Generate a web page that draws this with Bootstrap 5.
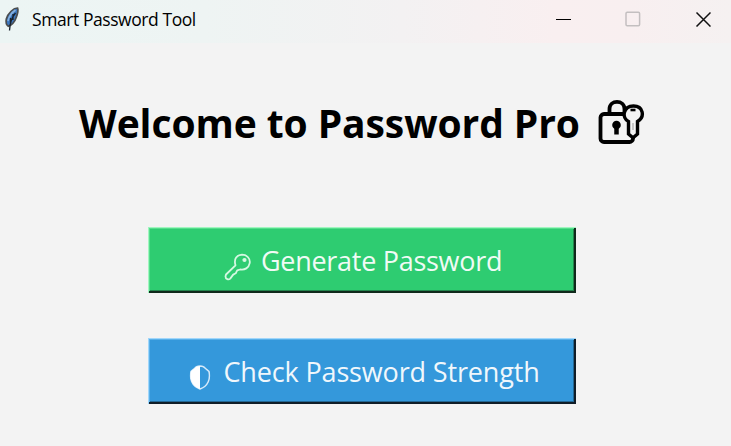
<!DOCTYPE html>
<html lang="en">
<head>
<meta charset="utf-8">
<title>Smart Password Tool</title>
<link href="https://cdn.jsdelivr.net/npm/bootstrap@5.3.0/dist/css/bootstrap.min.css" rel="stylesheet">
<style>
body{background:#f3f3f3;font-family:"Open Sans","Noto Sans",sans-serif;color:#000;overflow:hidden}
.titlebar{height:43px;padding:0 20px 5px 4px;background:linear-gradient(90deg,#ecf5f4 0,#eef4f3 28%,#f3f1f2 55%,#f9eff0 76%,#f8eff0 86%,#f5f1f1 100%)}
.caption{font-size:17.5px;line-height:24px;margin-left:11px;letter-spacing:-.43px}
.winctl{gap:54px}
.headline{font-size:39px;line-height:54px;font-weight:700;letter-spacing:-.08px;margin:0;white-space:nowrap}
.headrow{margin:53px 0 0 79px;height:54px}
.lockicon{margin-left:15px}
.actions{padding:77px 0 0 148px;gap:45px}
.tkbtn{width:428px;height:66px;color:#fff;font-size:27px;line-height:36px;white-space:nowrap;border:0;border-radius:0;text-align:left}
.tkgreen{background:#2ecc71;box-shadow:inset 1px 1px #a0f6bf,inset -2px -2px #10291b,inset 2px 2px #55dd8c,inset -3px -3px #23854d}
.tkblue{background:#3498db;box-shadow:inset 1px 1px #a0d6fa,inset -2px -2px #101d27,inset 2px 2px #58b0ea,inset -3px -3px #236895}
.tkgreen{padding:2px 0 0 76px}
.tkblue{padding:2px 0 0 42px}
.lbl{letter-spacing:-.29px;opacity:.93;margin-left:9px}
.tkblue .lbl{letter-spacing:-.15px;margin-left:12.5px}
</style>
<script src="https://cdn.jsdelivr.net/npm/bootstrap@5.3.0/dist/js/bootstrap.bundle.min.js"></script>
</head>
<body>
<header class="titlebar d-flex align-items-center">
<svg width="17" height="26" viewBox="0 0 17 26"><path d="M13.600 2C9.500 2 4 7 2.300 13c-.6 3 .2 6 2 7.200C8 19 11 15 12.200 11.500 13.500 8 14.500 4 13.600 2z" fill="#3d78c0" stroke="#4b4e50" stroke-width="1.700"/><path d="M11.500 4C8 6.500 5 10 4 15" stroke="#84b0df" stroke-width="1.700" fill="none"/><path d="M11.500 7C8 11 6 16 5.500 24.500M9 8v6M6.500 12v6" stroke="#17212d" stroke-width="1.300" fill="none"/></svg>
<span class="caption">Smart Password Tool</span>
<div class="winctl d-flex align-items-center ms-auto">
<svg width="16" height="16" viewBox="0 0 16 16"><path d="M1 8.500h15" stroke="#000"/></svg>
<svg width="16" height="16" viewBox="0 0 16 16"><rect x="1" y="1.200" width="13.600" height="13.600" rx="1.200" fill="none" stroke="#c3bfc0" stroke-width="1.500"/></svg>
<svg width="16" height="16" viewBox="0 0 16 16"><path d="M1.500 1.500l14 14M15.500 1.500L1.500 15.500" stroke="#111" stroke-width="1.500"/></svg>
</div>
</header>
<main>
<div class="headrow d-flex">
<h1 class="headline">Welcome to Password Pro</h1>
<svg class="lockicon flex-shrink-0" width="50" height="50" viewBox="595 97 50 50" fill="none" stroke="#000" stroke-width="3.800"><path d="M609.500 114v-4c0-9.500 15-9.500 15 0v4"/><rect x="600.500" y="115" width="32.500" height="28" rx="3.500"/><path d="M633.500 107c-10.500 0-12 12-5 15.500v12.500l4.500 3.700 4.500-3.700V122.500c8-5 5.500-15.500-4-15.500z" fill="#f3f3f3" stroke-width="3.400"/><path d="M630.500 111h5" stroke-width="2.600"/><path d="M633 124v7" stroke="#999" stroke-width="1"/><circle cx="616.500" cy="126" r="4.300" fill="#000" stroke="none"/><path d="M616.500 126v9.500" stroke-width="4.500"/></svg>
</div>
<div class="actions d-flex flex-column align-items-start">
<button type="button" class="tkbtn tkgreen d-flex align-items-center">
<svg width="28" height="28" viewBox="0 0 28 28" fill="none" stroke="#d5f8e2" stroke-width="1.800" stroke-linejoin="round" transform="translate(0 6)"><path d="M2 21.500l9.500-9.200C9.500 5.500 13 2 18 1.700c5 0 8.500 4 7.700 8.500-.8 4.500-5 7.200-9.500 6.300l-3 .8-1.500 3-2.500 1.300-3 4c-1.500 1.500-4.700.8-4.700-2.100z"/><circle cx="20.500" cy="7" r="1.200" fill="#fff"/></svg>
<span class="lbl">Generate Password</span>
</button>
<button type="button" class="tkbtn tkblue d-flex align-items-center">
<svg width="21" height="26" viewBox="0 0 21 26" transform="translate(-.5 5.500)"><path d="M10.500 1.500C8.500 1.700 6.500 2 5.500 3.500 4 5 2.500 5.500 1.500 7 0 14 2 21.500 10.500 24.500 19 21.500 21 14 19.500 7 18.500 5.500 17 5 15.500 3.500 14.500 2 12.500 1.700 10.500 1.500z" fill="none" stroke="#d5eafa" stroke-width="1.500"/><path d="M10.500 1.500C8.500 1.700 6.500 2 5.500 3.500 4 5 2.500 5.500 1.500 7 0 14 2 21.500 10.500 24.500z" fill="#fff"/></svg>
<span class="lbl">Check Password Strength</span>
</button>
</div>
</main>
</body>
</html>
